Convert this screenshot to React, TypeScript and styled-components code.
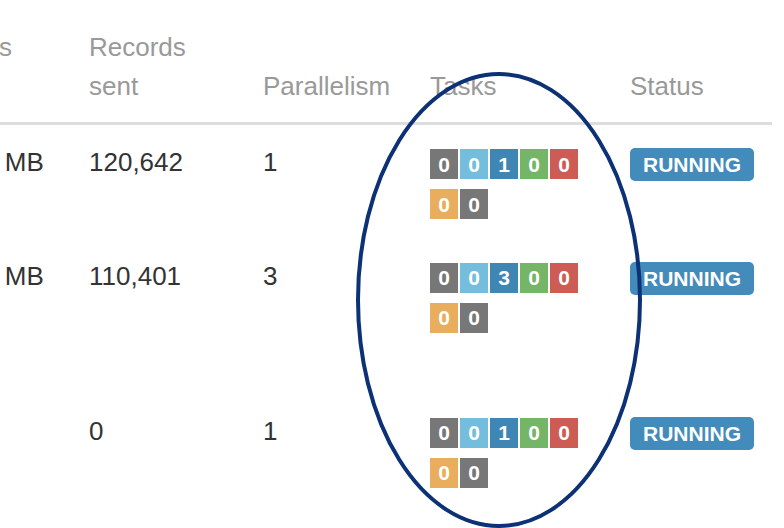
import styled, { createGlobalStyle } from "styled-components";

type VertexRow = {
  id: string;
  bytesSent: string;
  recordsSent: string;
  parallelism: number;
  tasks: number[];
  status: string;
  tall?: boolean;
};

const vertices: VertexRow[] = [
  { id: "a", bytesSent: "4.35 MB", recordsSent: "120,642", parallelism: 1, tasks: [0, 0, 1, 0, 0, 0, 0], status: "RUNNING" },
  { id: "b", bytesSent: "4.23 MB", recordsSent: "110,401", parallelism: 3, tasks: [0, 0, 3, 0, 0, 0, 0], status: "RUNNING", tall: true },
  { id: "c", bytesSent: "0 B", recordsSent: "0", parallelism: 1, tasks: [0, 0, 1, 0, 0, 0, 0], status: "RUNNING" },
];

const taskColors = ["#777777", "#74bddc", "#3f86b5", "#75b568", "#cd5c55", "#e8ae5e", "#777777"];

const GlobalStyle = createGlobalStyle`
  html, body {
    margin: 0;
    padding: 0;
    background: #ffffff;
  }
  body {
    font-family: "Liberation Sans", Arial, sans-serif;
  }
`;

const Page = styled.div`
  position: relative;
  width: 784px;
  height: 528px;
  overflow: hidden;
  padding-top: 13px;
  box-sizing: border-box;
`;

const Table = styled.table`
  margin-left: -68px;
  width: 840px;
  border-collapse: collapse;
  table-layout: fixed;
  font-size: 26px;
  line-height: 37px;
  color: #333333;
`;

// widths are content widths; each cell adds 15px padding on both sides
const HeadCell = styled.th<{ $width: number }>`
  width: ${(p) => p.$width}px;
  padding: 15px 15px 16px;
  line-height: 39px;
  text-align: left;
  vertical-align: bottom;
  font-weight: normal;
  color: #999999;
  border-bottom: 3px solid #dddddd;
`;

const Row = styled.tr<{ $tall?: boolean }>`
  height: ${(p) => (p.$tall ? 155 : 115)}px;
  & + & > td {
    border-top: 2px solid #dddddd;
  }
`;

const Cell = styled.td`
  padding: 19px 15px 12px;
  vertical-align: top;
  white-space: nowrap;
`;

const TasksCell = styled.td`
  padding: 24px 15px 16px;
  vertical-align: top;
`;

const TaskGrid = styled.div`
  display: flex;
  flex-wrap: wrap;
  width: 150px;
  gap: 10px 2px;
`;

const TaskBox = styled.span<{ $color: string }>`
  display: flex;
  align-items: center;
  justify-content: center;
  width: 28px;
  height: 30px;
  background: ${(p) => p.$color};
  color: #ffffff;
  font-size: 21px;
  font-weight: bold;
  line-height: 1;
`;

const StatusCell = styled.td`
  padding: 23px 15px 12px;
  vertical-align: top;
`;

const StatusBadge = styled.span`
  display: block;
  width: fit-content;
  padding: 6px 13px;
  border-radius: 5px;
  background: #428bbb;
  color: #ffffff;
  font-size: 21px;
  font-weight: bold;
  line-height: 21px;
`;

const Annotation = styled.svg`
  position: absolute;
  left: 0;
  top: 0;
  pointer-events: none;
`;

export default function App() {
  return (
    <>
      <GlobalStyle />
      <Page>
        <Table>
          <thead>
            <tr>
              <HeadCell $width={112}>Bytes sent</HeadCell>
              <HeadCell $width={144}>Records sent</HeadCell>
              <HeadCell $width={137}>Parallelism</HeadCell>
              <HeadCell $width={170}>Tasks</HeadCell>
              <HeadCell $width={127}>Status</HeadCell>
            </tr>
          </thead>
          <tbody>
            {vertices.map((v) => (
              <Row key={v.id} $tall={v.tall}>
                <Cell>{v.bytesSent}</Cell>
                <Cell>{v.recordsSent}</Cell>
                <Cell>{v.parallelism}</Cell>
                <TasksCell>
                  <TaskGrid>
                    {v.tasks.map((n, i) => (
                      <TaskBox key={i} $color={taskColors[i]}>
                        {n}
                      </TaskBox>
                    ))}
                  </TaskGrid>
                </TasksCell>
                <StatusCell>
                  <StatusBadge>{v.status}</StatusBadge>
                </StatusCell>
              </Row>
            ))}
          </tbody>
        </Table>
        <Annotation width="784" height="528" viewBox="0 0 784 528">
          <ellipse cx="499" cy="300" rx="141" ry="226" fill="none" stroke="#0c3175" strokeWidth="4" />
        </Annotation>
      </Page>
    </>
  );
}
